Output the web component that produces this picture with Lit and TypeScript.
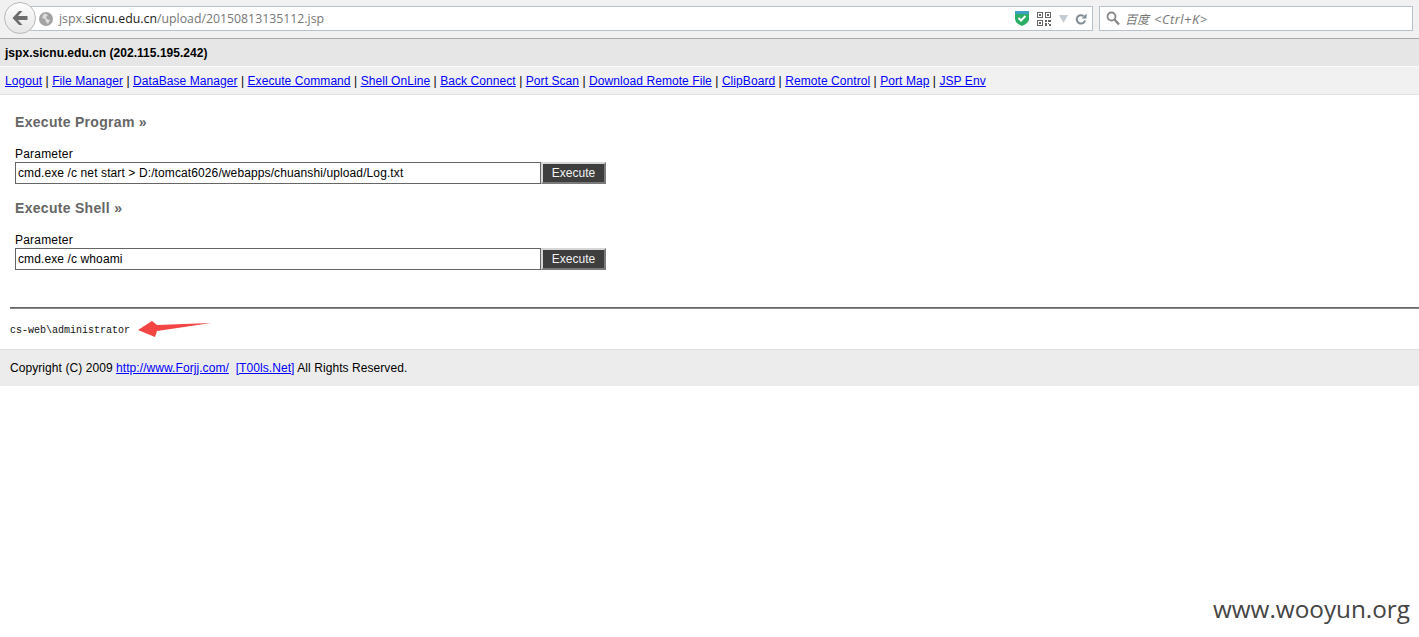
import { LitElement, html, css } from "lit";
import { customElement } from "lit/decorators.js";

const NAV = ["Logout","File Manager","DataBase Manager","Execute Command","Shell OnLine","Back Connect","Port Scan","Download Remote File","ClipBoard","Remote Control","Port Map","JSP Env"];

@customElement("app-root")
export class AppRoot extends LitElement {
  static styles = css`
    :host { display: block; position: relative; height: 637px; overflow: hidden; background: #fff; font-family: "Liberation Sans", Arial, sans-serif; font-size: 12px; color: #000; }
    a { color: #00f; text-decoration: underline; }
    .chrome { background: #f1f1f1; border-bottom: 1px solid #a9a9a9; display: flex; align-items: flex-start; padding: 6px 5px 0 4px; height: 32px; }
    .back { width: 30px; height: 30px; margin-top: -4px; border-radius: 50%; border: 1px solid #b9b9b9; background: linear-gradient(#fdfdfd,#e6e6e6); display: flex; align-items: center; justify-content: center; flex: none; z-index: 1; }
    .url { flex: none; width: 1062px; height: 23px; margin-left: -6px; background: #fff; border: 1px solid #b8c0c9; border-left: none; display: flex; align-items: center; font-family: "Open Sans", "Noto Sans", sans-serif; font-size: 12.3px; color: #777; }
    .globe { margin: 0 6px 0 9px; flex: none; }
    .url b { font-weight: 400; color: #222; }
    .url .addr { flex: 1; white-space: nowrap; }
    .tools { display: flex; align-items: center; gap: 8px; padding-right: 5px; }
    .reload { margin-left: -1px; }
    .search { flex: none; width: 306px; height: 23px; margin-left: 6px; background: #fff; border: 1px solid #b8c0c9; display: flex; align-items: center; gap: 5px; padding-left: 6px; font-family: "Open Sans", "Noto Sans CJK SC", sans-serif; font-style: italic; font-size: 12px; color: #777; }
    .search .keys { font-size: 13px; letter-spacing: .45px; }
    .head { height: 27px; background: #e6e6e6; border-bottom: 1px solid #fbfbfb; padding-left: 5px; display: flex; align-items: center; font-weight: 700; letter-spacing: .03px; }
    .nav { height: 27px; background: #f1f1f1; border-bottom: 1px solid #e0e0e0; padding-left: 5px; display: flex; align-items: center; white-space: pre; letter-spacing: .07px; }
    .main { padding: 19px 0 0 15px; height: 212px; box-sizing: border-box; }
    h2 { margin: 0; font-size: 14px; line-height: 16px; font-weight: 700; color: #666; letter-spacing: .3px; }
    .label { margin-top: 15px; height: 13px; line-height: 14px; padding-top: 2px; letter-spacing: .2px; }
    .row { display: flex; margin: 2px 0 0; height: 22px; }
    .input { width: 526px; box-sizing: border-box; height: 22px; border: 1px solid #666; background: #fff; padding-left: 2px; line-height: 20px; white-space: pre; letter-spacing: .11px; }
    .btn { width: 65px; box-sizing: border-box; height: 22px; background: #3e3e3e; color: #f2f2f2; border: 2px solid; border-color: #d6d6d6 #7a7a7a #7a7a7a #d6d6d6; display: flex; align-items: center; justify-content: center; padding-bottom: 1px; }
    .sec2 { margin-top: 16px; }
    .rule { margin-left: 10px; height: 2px; background: linear-gradient(#666 50%, #888 50%); }
    .out { height: 40px; padding-left: 10px; display: flex; align-items: center; gap: 8px; font-family: "Liberation Mono", monospace; font-size: 10px; color: #111; }
    .out span { padding-top: 2px; }
    .foot { height: 36px; background: #ececec; border-top: 1px solid #dedede; padding-left: 10px; display: flex; align-items: center; letter-spacing: .07px; }
    .foot span { white-space: pre; }
    .mark { position: absolute; right: 9px; top: 592px; font-family: "Open Sans", sans-serif; font-size: 24.3px; line-height: 33px; color: #444; }
  `;

  render() {
    return html`
      <div class="chrome">
        <div class="back">
          <svg width="18" height="16" viewBox="0 0 18 16"><path d="M8 1 1.500 8 8 15h3.500L7 10h9.500V6H7l4.500-5z" fill="#6d6d6d"/></svg>
        </div>
        <div class="url">
          <svg class="globe" width="14" height="14" viewBox="0 0 14 14"><circle cx="7" cy="7" r="7" fill="#a3a3a3"/><path d="M6 1.500 9 3 7 5 8 7l3 1-2 4-2-2-1-3-3-1 1-3z" fill="#dcdcdc"/></svg>
          <span class="addr">jspx.<b>sicnu.edu.cn</b>/upload/20150813135112.jsp</span>
          <div class="tools">
            <svg width="14" height="15" viewBox="0 0 14 15"><path d="M0 0h14v8q0 4-7 7Q0 12 0 8z" fill="#2bae66"/><path d="M0 0h14v3H0z" fill="#3f9fc0"/><path d="m3.500 7 2.500 2.500L10.500 5" stroke="#fff" stroke-width="2" fill="none"/></svg>
            <svg width="14" height="14" viewBox="0 0 14 14" fill="#666"><path fill-rule="evenodd" d="M0 0h6v6H0zM1 1v4h4V1zM8 0h6v6H8zM9 1v4h4V1zM0 8h6v6H0zM1 9v4h4V9z"/><path d="M2 2h2v2H2zM10 2h2v2h-2zM2 10h2v2H2zM8 8h2v2H8zM11 8h3v2h-3zM8 11h2v3H8zM11 11h1v1h-1zM12 12h2v2h-2z"/></svg>
            <svg width="9" height="8" viewBox="0 0 9 8"><path d="M0 0h9L4.500 8z" fill="#c3ccd3"/></svg>
            <svg class="reload" width="12" height="12" viewBox="0 0 12 12"><path d="M10 7.500A4.200 4.200 0 1 1 8.500 3" fill="none" stroke="#7f8c96" stroke-width="2"/><path d="M11.500 .5v5h-5z" fill="#7f8c96"/></svg>
          </div>
        </div>
        <div class="search">
          <svg width="14" height="15" viewBox="0 0 14 15"><circle cx="5.500" cy="5.500" r="4" fill="none" stroke="#888" stroke-width="1.800"/><path d="m8.500 8.500 4.500 5" stroke="#888" stroke-width="2.400"/></svg>
          <span>百度</span><span class="keys">&lt;Ctrl+K&gt;</span>
        </div>
      </div>
      <div class="head">jspx.sicnu.edu.cn (202.115.195.242)</div>
      <div class="nav">${NAV.map((n, i) => html`${i ? html`<span> | </span>` : ""}<a href="#">${n}</a>`)}</div>
      <div class="main">
        <h2>Execute Program »</h2>
        <div class="label">Parameter</div>
        <div class="row"><div class="input">cmd.exe /c net start &gt; D:/tomcat6026/webapps/chuanshi/upload/Log.txt</div><div class="btn">Execute</div></div>
        <h2 class="sec2">Execute Shell »</h2>
        <div class="label">Parameter</div>
        <div class="row"><div class="input">cmd.exe /c whoami</div><div class="btn">Execute</div></div>
      </div>
      <div class="rule"></div>
      <div class="out">
        <span>cs-web\\administrator</span>
        <svg width="74" height="18" viewBox="0 0 74 18"><path d="M0 10 14 1l5 4 54-2-54 8-2 6z" fill="#f44545"/></svg>
      </div>
      <div class="foot"><span>Copyright (C) 2009 <a href="#">http://www.Forjj.com/</a>  <a href="#">[T00ls.Net]</a> All Rights Reserved.</span></div>
      <div class="mark">www.wooyun.org</div>
    `;
  }
}
